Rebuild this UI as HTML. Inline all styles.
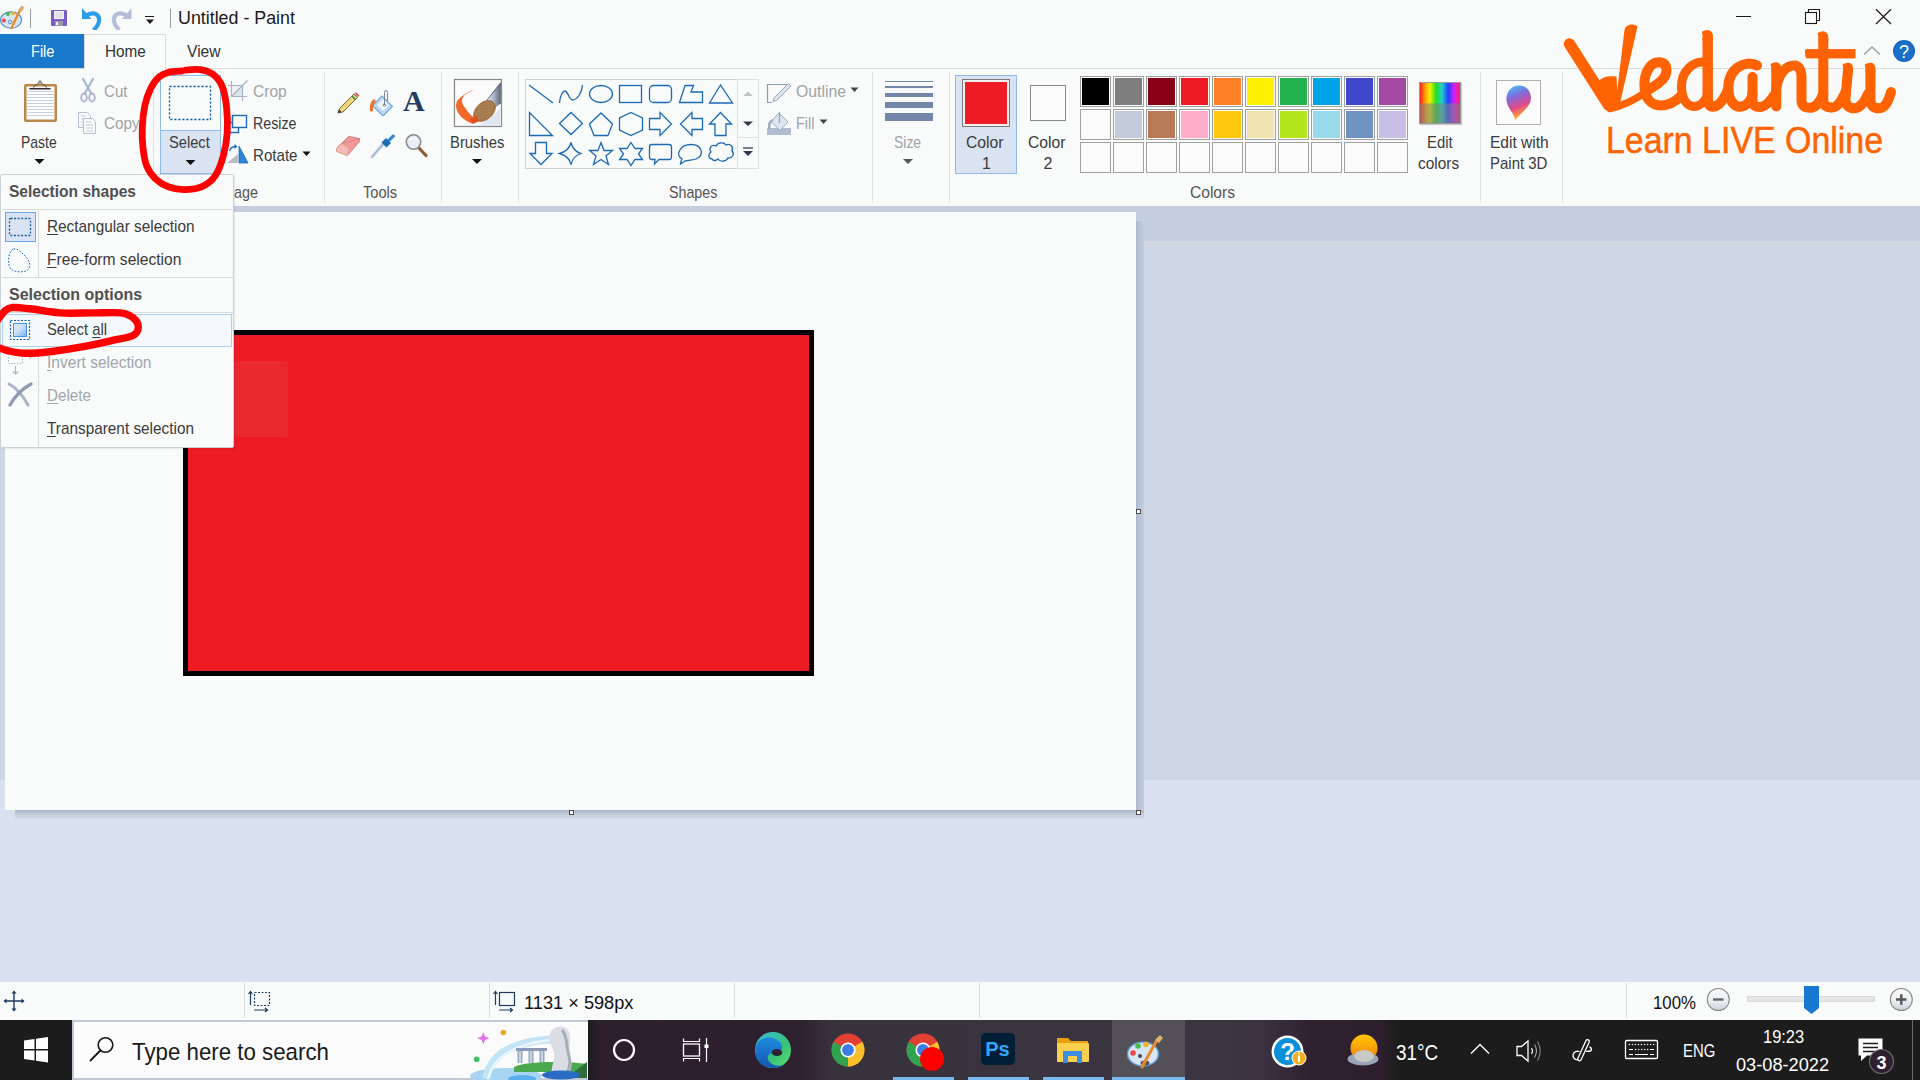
<!DOCTYPE html>
<html><head><meta charset="utf-8"><title>Untitled - Paint</title>
<style>
*{margin:0;padding:0;box-sizing:border-box}
html,body{width:1920px;height:1080px;overflow:hidden;background:#f9fafa;font-family:"Liberation Sans",sans-serif}
.a{position:absolute}
.t{position:absolute;white-space:nowrap}
u{text-decoration:underline;text-underline-offset:2px;text-decoration-thickness:1px}
</style></head><body>
<div class="a" style="left:0px;top:206px;width:1920px;height:776px;background:#cdd6e4;"></div><div class="a" style="left:0px;top:780px;width:1920px;height:202px;background:#d9e1f0;"></div><div class="a" style="left:0px;top:206px;width:1920px;height:35px;background:#c5cede;"></div><div class="a" style="left:1143px;top:241px;width:777px;height:4px;background:#d3d8e0;"></div><div class="a" style="left:1136px;top:221px;width:8px;height:597px;background:linear-gradient(90deg,#a9b5c9 0,#b8c3d4 30%,#bcc6d6 70%,#c8d0de 100%);"></div><div class="a" style="left:15px;top:810px;width:1129px;height:8px;background:linear-gradient(180deg,#a9b5c9 0,#b6c1d3 25%,#bcc6d6 50%,#c9d1e0 62%,#ccd4e2 100%);"></div><div class="a" style="left:5px;top:212px;width:1131px;height:598px;background:#f9fbfa;"></div><div class="a" style="left:183px;top:330px;width:631px;height:346px;background:#ed1c24;border:5px solid #000;"></div><div class="a" style="left:234px;top:361px;width:54px;height:76px;background:#e9282f;border-radius:3px;"></div><div class="a" style="left:1136px;top:509px;width:5px;height:5px;background:#fff;border:1px solid #4a4a4a;"></div><div class="a" style="left:569px;top:810px;width:5px;height:5px;background:#fff;border:1px solid #4a4a4a;"></div><div class="a" style="left:1136px;top:810px;width:5px;height:5px;background:#fff;border:1px solid #4a4a4a;"></div><div class="a" style="left:0px;top:0px;width:1920px;height:68px;background:#f9fafa;"></div><div class="t" style="left:178.00px;top:9.00px;font-size:18.90px;line-height:18.90px;color:#1a1a1a;transform:scaleX(0.9439);transform-origin:0.00px 0;">Untitled - Paint</div><div class="a" style="left:30px;top:9px;width:1px;height:19px;background:#9a9a9a;"></div><div class="a" style="left:170px;top:9px;width:1px;height:19px;background:#9a9a9a;"></div><div class="a" style="left:0px;top:34px;width:84px;height:34px;background:#1979ca;"></div><div class="a" style="left:84px;top:34px;width:82px;height:35px;background:#f9fafa;border:1px solid #dadbdc;border-bottom:none;"></div><div class="a" style="left:0px;top:68px;width:84px;height:1px;background:#dadbdc;"></div><div class="a" style="left:166px;top:68px;width:1754px;height:1px;background:#dadbdc;"></div><div class="t" style="left:30.60px;top:44.00px;font-size:15.99px;line-height:15.99px;color:#ffffff;transform:scaleX(0.9090);transform-origin:0.00px 0;">File</div><div class="t" style="left:104.90px;top:44.00px;font-size:15.99px;line-height:15.99px;color:#333333;transform:scaleX(0.9581);transform-origin:0.00px 0;">Home</div><div class="t" style="left:187.00px;top:44.00px;font-size:15.99px;line-height:15.99px;color:#333333;transform:scaleX(0.9775);transform-origin:0.00px 0;">View</div><div class="a" style="left:153px;top:72px;width:1px;height:131px;background:#e1e2e4;"></div><div class="a" style="left:324px;top:72px;width:1px;height:131px;background:#e1e2e4;"></div><div class="a" style="left:441px;top:72px;width:1px;height:131px;background:#e1e2e4;"></div><div class="a" style="left:518px;top:72px;width:1px;height:131px;background:#e1e2e4;"></div><div class="a" style="left:872px;top:72px;width:1px;height:131px;background:#e1e2e4;"></div><div class="a" style="left:949px;top:72px;width:1px;height:131px;background:#e1e2e4;"></div><div class="a" style="left:1480px;top:72px;width:1px;height:131px;background:#e1e2e4;"></div><div class="a" style="left:1562px;top:72px;width:1px;height:131px;background:#e1e2e4;"></div><div class="a" style="left:160px;top:75px;width:61px;height:99px;background:#f9fafa;border:1px solid #8cbbea;"></div><div class="a" style="left:160px;top:130px;width:61px;height:44px;background:#dae3f1;border:1px solid #8cbbea;"></div><div class="t" style="left:21.25px;top:135.00px;font-size:15.99px;line-height:15.99px;color:#3b3b3b;transform:scaleX(0.8739);transform-origin:0.00px 0;">Paste</div><div class="t" style="left:103.50px;top:84.00px;font-size:15.99px;line-height:15.99px;color:#a0a3a8;transform:scaleX(0.9452);transform-origin:0.00px 0;">Cut</div><div class="t" style="left:103.50px;top:116.00px;font-size:15.99px;line-height:15.99px;color:#a0a3a8;transform:scaleX(0.9509);transform-origin:0.00px 0;">Copy</div><div class="t" style="left:169.20px;top:135.00px;font-size:15.99px;line-height:15.99px;color:#3b3b3b;transform:scaleX(0.9179);transform-origin:0.00px 0;">Select</div><div class="t" style="left:253.00px;top:84.00px;font-size:15.99px;line-height:15.99px;color:#a0a3a8;transform:scaleX(0.9713);transform-origin:0.00px 0;">Crop</div><div class="t" style="left:253.00px;top:116.00px;font-size:15.99px;line-height:15.99px;color:#3b3b3b;transform:scaleX(0.8885);transform-origin:0.00px 0;">Resize</div><div class="t" style="left:253.00px;top:148.00px;font-size:15.99px;line-height:15.99px;color:#3b3b3b;transform:scaleX(0.9451);transform-origin:0.00px 0;">Rotate</div><div class="t" style="left:362.90px;top:185.00px;font-size:15.99px;line-height:15.99px;color:#555;transform:scaleX(0.9134);transform-origin:0.00px 0;">Tools</div><div class="t" style="left:450.00px;top:135.00px;font-size:15.99px;line-height:15.99px;color:#3b3b3b;transform:scaleX(0.9288);transform-origin:0.00px 0;">Brushes</div><div class="t" style="left:668.75px;top:185.00px;font-size:15.99px;line-height:15.99px;color:#555;transform:scaleX(0.8902);transform-origin:0.00px 0;">Shapes</div><div class="t" style="left:795.50px;top:84.00px;font-size:15.99px;line-height:15.99px;color:#a0a3a8;transform:scaleX(0.9865);transform-origin:0.00px 0;">Outline</div><div class="t" style="left:795.50px;top:116.00px;font-size:15.99px;line-height:15.99px;color:#a0a3a8;transform:scaleX(0.9075);transform-origin:0.00px 0;">Fill</div><div class="t" style="left:894.40px;top:135.00px;font-size:15.99px;line-height:15.99px;color:#a0a3a8;transform:scaleX(0.8715);transform-origin:0.00px 0;">Size</div><div class="t" style="left:1190.00px;top:185.00px;font-size:15.99px;line-height:15.99px;color:#555;transform:scaleX(0.9739);transform-origin:0.00px 0;">Colors</div><div class="t" style="left:1426.50px;top:135.00px;font-size:15.99px;line-height:15.99px;color:#3b3b3b;transform:scaleX(0.9318);transform-origin:0.00px 0;">Edit</div><div class="t" style="left:1418.20px;top:156.00px;font-size:15.99px;line-height:15.99px;color:#3b3b3b;transform:scaleX(0.9651);transform-origin:0.00px 0;">colors</div><div class="t" style="left:1489.70px;top:135.00px;font-size:15.99px;line-height:15.99px;color:#3b3b3b;transform:scaleX(0.9729);transform-origin:0.00px 0;">Edit with</div><div class="t" style="left:1490.40px;top:156.00px;font-size:15.99px;line-height:15.99px;color:#3b3b3b;transform:scaleX(0.9361);transform-origin:0.00px 0;">Paint 3D</div><div class="t" style="left:234.00px;top:185.00px;font-size:15.99px;line-height:15.99px;color:#555;transform:scaleX(0.8989);transform-origin:0.00px 0;">age</div><div class="a" style="left:955px;top:75px;width:62px;height:99px;background:#dae3f1;border:1px solid #8cbbea;"></div><div class="a" style="left:962px;top:79px;width:48px;height:48px;background:#ed1c24;border:1px solid #7a7a7a;box-shadow:inset 0 0 0 2px #f0f0f0;"></div><div class="a" style="left:1030px;top:85px;width:36px;height:36px;background:#fafbfa;border:1px solid #8a8a8a;"></div><div class="t" style="left:966.25px;top:135.00px;font-size:15.99px;line-height:15.99px;color:#3b3b3b;transform:scaleX(0.9814);transform-origin:0.00px 0;">Color</div><div class="t" style="left:982.00px;top:156.00px;font-size:15.99px;line-height:15.99px;color:#3b3b3b;">1</div><div class="t" style="left:1028.30px;top:135.00px;font-size:15.99px;line-height:15.99px;color:#3b3b3b;transform:scaleX(0.9814);transform-origin:0.00px 0;">Color</div><div class="t" style="left:1043.60px;top:156.00px;font-size:15.99px;line-height:15.99px;color:#3b3b3b;">2</div><div class="a" style="left:1080px;top:76px;width:31px;height:31px;background:#000000;border:1px solid #a0a0a0;box-shadow:inset 0 0 0 1px #fafbfa;"></div><div class="a" style="left:1080px;top:109px;width:31px;height:31px;background:#fafbfa;border:1px solid #a0a0a0;box-shadow:inset 0 0 0 1px #fafbfa;"></div><div class="a" style="left:1080px;top:142px;width:31px;height:31px;background:#fafbfa;border:1px solid #a0a0a0;"></div><div class="a" style="left:1113px;top:76px;width:31px;height:31px;background:#7f7f7f;border:1px solid #a0a0a0;box-shadow:inset 0 0 0 1px #fafbfa;"></div><div class="a" style="left:1113px;top:109px;width:31px;height:31px;background:#c3cad9;border:1px solid #a0a0a0;box-shadow:inset 0 0 0 1px #fafbfa;"></div><div class="a" style="left:1113px;top:142px;width:31px;height:31px;background:#fafbfa;border:1px solid #a0a0a0;"></div><div class="a" style="left:1146px;top:76px;width:31px;height:31px;background:#880015;border:1px solid #a0a0a0;box-shadow:inset 0 0 0 1px #fafbfa;"></div><div class="a" style="left:1146px;top:109px;width:31px;height:31px;background:#b97a57;border:1px solid #a0a0a0;box-shadow:inset 0 0 0 1px #fafbfa;"></div><div class="a" style="left:1146px;top:142px;width:31px;height:31px;background:#fafbfa;border:1px solid #a0a0a0;"></div><div class="a" style="left:1179px;top:76px;width:31px;height:31px;background:#ed1c24;border:1px solid #a0a0a0;box-shadow:inset 0 0 0 1px #fafbfa;"></div><div class="a" style="left:1179px;top:109px;width:31px;height:31px;background:#ffaec9;border:1px solid #a0a0a0;box-shadow:inset 0 0 0 1px #fafbfa;"></div><div class="a" style="left:1179px;top:142px;width:31px;height:31px;background:#fafbfa;border:1px solid #a0a0a0;"></div><div class="a" style="left:1212px;top:76px;width:31px;height:31px;background:#ff7f27;border:1px solid #a0a0a0;box-shadow:inset 0 0 0 1px #fafbfa;"></div><div class="a" style="left:1212px;top:109px;width:31px;height:31px;background:#ffc90e;border:1px solid #a0a0a0;box-shadow:inset 0 0 0 1px #fafbfa;"></div><div class="a" style="left:1212px;top:142px;width:31px;height:31px;background:#fafbfa;border:1px solid #a0a0a0;"></div><div class="a" style="left:1245px;top:76px;width:31px;height:31px;background:#fff200;border:1px solid #a0a0a0;box-shadow:inset 0 0 0 1px #fafbfa;"></div><div class="a" style="left:1245px;top:109px;width:31px;height:31px;background:#efe4b0;border:1px solid #a0a0a0;box-shadow:inset 0 0 0 1px #fafbfa;"></div><div class="a" style="left:1245px;top:142px;width:31px;height:31px;background:#fafbfa;border:1px solid #a0a0a0;"></div><div class="a" style="left:1278px;top:76px;width:31px;height:31px;background:#22b14c;border:1px solid #a0a0a0;box-shadow:inset 0 0 0 1px #fafbfa;"></div><div class="a" style="left:1278px;top:109px;width:31px;height:31px;background:#b5e61d;border:1px solid #a0a0a0;box-shadow:inset 0 0 0 1px #fafbfa;"></div><div class="a" style="left:1278px;top:142px;width:31px;height:31px;background:#fafbfa;border:1px solid #a0a0a0;"></div><div class="a" style="left:1311px;top:76px;width:31px;height:31px;background:#00a2e8;border:1px solid #a0a0a0;box-shadow:inset 0 0 0 1px #fafbfa;"></div><div class="a" style="left:1311px;top:109px;width:31px;height:31px;background:#99d9ea;border:1px solid #a0a0a0;box-shadow:inset 0 0 0 1px #fafbfa;"></div><div class="a" style="left:1311px;top:142px;width:31px;height:31px;background:#fafbfa;border:1px solid #a0a0a0;"></div><div class="a" style="left:1344px;top:76px;width:31px;height:31px;background:#3f48cc;border:1px solid #a0a0a0;box-shadow:inset 0 0 0 1px #fafbfa;"></div><div class="a" style="left:1344px;top:109px;width:31px;height:31px;background:#7092be;border:1px solid #a0a0a0;box-shadow:inset 0 0 0 1px #fafbfa;"></div><div class="a" style="left:1344px;top:142px;width:31px;height:31px;background:#fafbfa;border:1px solid #a0a0a0;"></div><div class="a" style="left:1377px;top:76px;width:31px;height:31px;background:#a349a4;border:1px solid #a0a0a0;box-shadow:inset 0 0 0 1px #fafbfa;"></div><div class="a" style="left:1377px;top:109px;width:31px;height:31px;background:#c8bfe7;border:1px solid #a0a0a0;box-shadow:inset 0 0 0 1px #fafbfa;"></div><div class="a" style="left:1377px;top:142px;width:31px;height:31px;background:#fafbfa;border:1px solid #a0a0a0;"></div><div class="a" style="left:885px;top:81px;width:48px;height:1px;background:#7587a8;"></div><div class="a" style="left:885px;top:86px;width:48px;height:2px;background:#7587a8;"></div><div class="a" style="left:885px;top:93px;width:48px;height:4px;background:#7587a8;"></div><div class="a" style="left:885px;top:102px;width:48px;height:6px;background:#7587a8;"></div><div class="a" style="left:885px;top:113px;width:48px;height:8px;background:#7587a8;"></div><div class="a" style="left:233px;top:176px;width:3px;height:273px;background:linear-gradient(90deg,rgba(0,0,0,.12),rgba(0,0,0,0));"></div><div class="a" style="left:3px;top:447px;width:232px;height:3px;background:linear-gradient(180deg,rgba(0,0,0,.12),rgba(0,0,0,0));"></div><div class="a" style="left:0px;top:174px;width:234px;height:274px;background:#f9fafa;border:1px solid #cdd0d6;border-radius:2px;"></div><div class="a" style="left:2px;top:209px;width:231px;height:1px;background:#d9dbde;"></div><div class="a" style="left:2px;top:277px;width:231px;height:1px;background:#d9dbde;"></div><div class="a" style="left:2px;top:312px;width:231px;height:1px;background:#d9dbde;"></div><div class="a" style="left:38px;top:211px;width:1px;height:66px;background:#d9dbde;"></div><div class="a" style="left:38px;top:347px;width:1px;height:100px;background:#d9dbde;"></div><div class="t" style="left:9.00px;top:184.00px;font-size:15.99px;line-height:15.99px;color:#505050;transform:scaleX(0.9722);transform-origin:0.00px 0;font-weight:bold;">Selection shapes</div><div class="t" style="left:9.00px;top:287.00px;font-size:15.99px;line-height:15.99px;color:#505050;font-weight:bold;">Selection options</div><div class="t" style="left:47.00px;top:219.00px;font-size:15.99px;line-height:15.99px;color:#3b3b3b;transform:scaleX(0.9601);transform-origin:0.00px 0;"><u>R</u>ectangular selection</div><div class="t" style="left:47.00px;top:252.00px;font-size:15.99px;line-height:15.99px;color:#3b3b3b;transform:scaleX(0.9765);transform-origin:0.00px 0;"><u>F</u>ree-form selection</div><div class="a" style="left:2px;top:314px;width:230px;height:33px;background:#f5f9fc;border:1px solid #a9d1f5;"></div><div class="t" style="left:47.00px;top:322.00px;font-size:15.99px;line-height:15.99px;color:#3b3b3b;transform:scaleX(0.9243);transform-origin:0.00px 0;">Select <u>a</u>ll</div><div class="t" style="left:47.00px;top:355.00px;font-size:15.99px;line-height:15.99px;color:#a3a6ab;transform:scaleX(0.9719);transform-origin:0.00px 0;"><u>I</u>nvert selection</div><div class="t" style="left:47.00px;top:388.00px;font-size:15.99px;line-height:15.99px;color:#a3a6ab;transform:scaleX(0.9522);transform-origin:0.00px 0;"><u>D</u>elete</div><div class="t" style="left:47.00px;top:421.00px;font-size:15.99px;line-height:15.99px;color:#3b3b3b;transform:scaleX(0.9597);transform-origin:0.00px 0;"><u>T</u>ransparent selection</div><div class="a" style="left:5px;top:212px;width:31px;height:30px;background:#dae3f1;border:1px solid #6aa6e8;"></div><div class="a" style="left:0px;top:981px;width:1920px;height:39px;background:#f9fafa;border-top:1px solid #dfe3ea;"></div><div class="a" style="left:244px;top:983px;width:1px;height:35px;background:#dcdcdc;"></div><div class="a" style="left:489px;top:983px;width:1px;height:35px;background:#dcdcdc;"></div><div class="a" style="left:734px;top:983px;width:1px;height:35px;background:#dcdcdc;"></div><div class="a" style="left:979px;top:983px;width:1px;height:35px;background:#dcdcdc;"></div><div class="a" style="left:1626px;top:983px;width:1px;height:35px;background:#dcdcdc;"></div><div class="t" style="left:523.80px;top:994.00px;font-size:18.90px;line-height:18.90px;color:#111111;transform:scaleX(0.9634);transform-origin:0.00px 0;">1131 &times; 598px</div><div class="t" style="left:1653.00px;top:994.00px;font-size:18.90px;line-height:18.90px;color:#111111;transform:scaleX(0.8889);transform-origin:0.00px 0;">100%</div><div class="a" style="left:1747px;top:996px;width:128px;height:6px;background:#e6e6e6;border:1px solid #dadada;"></div><div class="a" style="left:0px;top:1020px;width:1920px;height:60px;background:linear-gradient(90deg,#1c1c1c 0,#1c1c1c 587px,#2d1f2e 600px,#2e202f 800px,#38323d 830px,#3a3540 1230px,#3c3241 1260px,#302131 1310px,#2e1f2e 1380px,#1c1c1c 1400px,#1c1c1c 1920px);"></div><div class="a" style="left:72px;top:1020px;width:516px;height:60px;background:#fafbfa;border:2px solid #c2c9d6;border-right:none;"></div><div class="t" style="left:132.00px;top:1041.00px;font-size:23.26px;line-height:23.26px;color:#1a1a1a;transform:scaleX(0.9583);transform-origin:0.00px 0;">Type here to search</div><div class="t" style="left:1395.80px;top:1042.00px;font-size:21.80px;line-height:21.80px;color:#ffffff;transform:scaleX(0.8660);transform-origin:0.00px 0;">31°C</div><div class="t" style="left:1683.00px;top:1042.00px;font-size:18.90px;line-height:18.90px;color:#ffffff;transform:scaleX(0.7871);transform-origin:0.00px 0;">ENG</div><div class="t" style="left:1762.70px;top:1028.00px;font-size:18.75px;line-height:18.75px;color:#ffffff;transform:scaleX(0.8772);transform-origin:0.00px 0;">19:23</div><div class="t" style="left:1736.30px;top:1055.00px;font-size:19.19px;line-height:19.19px;color:#ffffff;transform:scaleX(0.9487);transform-origin:0.00px 0;">03-08-2022</div><div class="a" style="left:1112px;top:1020px;width:73px;height:60px;background:#545058;"></div><div class="a" style="left:893px;top:1077px;width:61px;height:3px;background:#76b9ed;"></div><div class="a" style="left:968px;top:1077px;width:61px;height:3px;background:#76b9ed;"></div><div class="a" style="left:1043px;top:1077px;width:61px;height:3px;background:#76b9ed;"></div><div class="a" style="left:1112px;top:1077px;width:73px;height:3px;background:#76b9ed;"></div><div class="a" style="left:1912px;top:1020px;width:1px;height:60px;background:#6a6a6a;"></div><div class="t" style="left:1605.50px;top:122.00px;font-size:37.21px;line-height:37.21px;color:#ff6400;transform:scaleX(0.9112);transform-origin:0.00px 0;-webkit-text-stroke:0.5px #ff6400;">Learn LIVE Online</div><svg class="a" style="left:0;top:0" width="1920" height="130" viewBox="0 0 1920 130"><g fill="none" stroke="#ff6200" stroke-linecap="round" stroke-linejoin="round">
<path stroke-width="11.5" d="M1569.5,44 L1608.5,105"/>
<path stroke-width="7.5" d="M1610,108.5 C1622,106 1636,99 1646,92"/>
<path stroke-width="10" d="M1645,92 C1651,88 1657,85 1661,81 C1668,75 1669,63 1660,62.3 C1650,61.5 1644.4,73 1644.4,85 C1644.4,98 1651,105.4 1661,105.4 C1670,105.4 1676,101 1681,96"/>
<path stroke-width="9" d="M1707,62.5 C1692,59.5 1681.5,73 1681.5,86 C1681.5,99 1687,106.5 1694,106.5 C1700,106.5 1705,101 1707.7,95"/>
<path stroke-width="10.4" stroke-linecap="butt" d="M1707.7,38 L1707.7,99 C1707.7,106.5 1712,107.5 1716,106"/>
<path stroke-width="10" d="M1716,106 C1721,104 1725,97 1728.3,89"/>
<path stroke-width="10" d="M1757,65.5 C1745,59 1728.3,69 1728.3,88 C1728.3,100 1734,106.8 1740,106.8 C1747,106.8 1752.5,99 1752.5,93"/>
<path stroke-width="10" d="M1752.5,77 L1752.5,99 C1752.5,106 1756,107.5 1761,107 C1767,106 1772,99 1776.25,92"/>
<path stroke-width="10" stroke-linecap="butt" d="M1776.25,70 L1776.25,104"/>
<path stroke-width="10" d="M1776.25,104 L1776.25,106.5"/>
<path stroke-width="10" d="M1776.25,88 C1779,72 1787,65.5 1794,65.5 C1799,65.5 1801.5,70 1801.5,78 L1801.5,100 C1801.5,106 1805,107.8 1810,107.8 C1816,107.8 1820,102 1823.3,94"/>
<path stroke-width="10" stroke-linecap="butt" d="M1823.3,39 L1823.3,99 C1823.3,106 1827,107.5 1832,107.5"/>
<path stroke-width="10" d="M1832,107.5 C1838,107.5 1842,100 1845.5,92"/>
<path stroke-width="9" stroke-linecap="butt" d="M1806,53.8 L1855,53.8"/>
<path stroke-width="10" stroke-linecap="butt" d="M1848,70 L1845.5,98 C1845,105 1849,108.3 1854,108.3"/>
<path stroke-width="10" d="M1854,108.3 C1860,108.3 1865,101 1868,94"/>
<path stroke-width="10" stroke-linecap="butt" d="M1870.4,70 L1870.4,99 C1870.4,106 1874,108.3 1879,108.3"/>
<path stroke-width="10" d="M1879,108.3 C1886,108.3 1889,99 1891,92"/>
</g>
<path fill="#ff6200" d="M1805,50.5 Q1805,49.3 1807,49.3 L1855.5,49.3 L1855.5,58.3 L1809,58.3 Q1805,58.3 1805,54 Z"/>
<path fill="#ff6200" d="M1624.5,30 C1625.5,25 1632,22.5 1637.5,26.5 L1619.5,105.5 L1615.5,104.5 Z"/>
<path fill="#ff6200" d="M1599,80.5 C1603,76.5 1609,75.5 1616.5,76.5 L1618,105 L1609,109 Z"/>
<path fill="#ff6200" d="M1702.5,40.2 L1702.5,35.2 L1701.8,31.8 Q1705.5,29.599999999999998 1708.5,30.2 Q1713.2,31.2 1712.9,37.2 L1712.9,40.2 Z"/><path fill="#ff6200" d="M1771.25,72.5 L1771.25,67.5 L1770.55,64.1 Q1774.25,61.9 1777.25,62.5 Q1781.55,63.5 1781.25,69.5 L1781.25,72.5 Z"/><path fill="#ff6200" d="M1818.3,41.5 L1818.3,36.5 L1817.6,33.1 Q1821.3,30.9 1824.3,31.5 Q1828.6,32.5 1828.3,38.5 L1828.3,41.5 Z"/><path fill="#ff6200" d="M1843.2,72.8 L1843.2,67.8 L1842.5,64.39999999999999 Q1846.2,62.199999999999996 1849.2,62.8 Q1853.3,63.8 1853,69.8 L1853,72.8 Z"/><path fill="#ff6200" d="M1865.4,72.8 L1865.4,67.8 L1864.7,64.39999999999999 Q1868.4,62.199999999999996 1871.4,62.8 Q1875.7,63.8 1875.4,69.8 L1875.4,72.8 Z"/></svg><svg class="a" style="left:0px;top:3px" width="26" height="27" viewBox="0 0 26 27"><ellipse cx="11" cy="17" rx="10.5" ry="8" fill="#d6e6f5" stroke="#5b97cf" stroke-width="1.3"/>
<circle cx="4" cy="17.5" r="2" fill="#e84a4a"/><circle cx="8" cy="11" r="2" fill="#4fb84f"/><circle cx="13" cy="10.5" r="2" fill="#f0b428"/>
<circle cx="10" cy="19" r="1.8" fill="none" stroke="#5b97cf" stroke-width="1"/><ellipse cx="12" cy="23" rx="3" ry="1.6" fill="#f9fafa"/>
<path d="M11.5,25 L20,7" stroke="#e8892a" stroke-width="2.4" stroke-linecap="round"/><path d="M18.5,6 L22,2.5 L24.5,4.5 L21.5,9 Z" fill="#e0b070"/></svg><svg class="a" style="left:50px;top:9px" width="19" height="18" viewBox="0 0 19 18"><rect x="1" y="1" width="16" height="16" rx="1" fill="#7a5cc8"/><rect x="4" y="2" width="10" height="8" fill="#f4f4f8"/>
<path d="M5,4 H13 M5,6 H13 M5,8 H13" stroke="#c8c8d8" stroke-width=".8"/><rect x="5" y="12" width="8" height="5" fill="#9a9aa8"/><rect x="6" y="13" width="2" height="3" fill="#f4f4f8"/></svg><svg class="a" style="left:80px;top:6px" width="22" height="24" viewBox="0 0 22 24"><path d="M6,9.5 C13,5 20,8 19,15 C18.5,19 16,22 13.5,24" fill="none" stroke="#2b9de9" stroke-width="4.2" stroke-linecap="butt"/>
<path d="M2,2 L2,13 L11.5,13 Z" fill="#2b9de9"/></svg><svg class="a" style="left:111px;top:6px" width="22" height="24" viewBox="0 0 22 24"><path d="M16,9.5 C9,5 2,8 3,15 C3.5,19 6,22 8.5,24" fill="none" stroke="#b3c0d8" stroke-width="4.2"/>
<path d="M20.5,2 L20.5,13 L11,13 Z" fill="#b3c0d8"/></svg><div class="a" style="left:145px;top:16px;width:9px;height:1px;background:#1a1a1a;"></div><svg class="a" style="left:145px;top:19px" width="10" height="6" viewBox="0 0 10 6"><path d="M1,0.5 L9,0.5 L5,5 Z" fill="#1a1a1a"/></svg><div class="a" style="left:1736px;top:16px;width:15px;height:1px;background:#1a1a1a;"></div><svg class="a" style="left:1800px;top:5px" width="26" height="24" viewBox="0 0 26 24"><rect x="5.5" y="7.5" width="11" height="11" fill="none" stroke="#1a1a1a" stroke-width="1.1"/><path d="M8.5,7.5 V4.5 H19.5 V15.5 H16.5" fill="none" stroke="#1a1a1a" stroke-width="1.1"/></svg><svg class="a" style="left:1870px;top:4px" width="28" height="24" viewBox="0 0 28 24"><path d="M6,5.2 L21,20 M21,5.2 L6,20" stroke="#1a1a1a" stroke-width="1.2"/></svg><svg class="a" style="left:1860px;top:42px" width="24" height="16" viewBox="0 0 24 16"><path d="M4,12.5 L12,5 L20,12.5" fill="none" stroke="#9aa2ae" stroke-width="1.4"/></svg><svg class="a" style="left:1890px;top:37px" width="28" height="28" viewBox="0 0 28 28"><circle cx="14" cy="14" r="11" fill="#1565c0"/><circle cx="14" cy="14" r="10" fill="#1b6fc9"/>
<text x="14" y="20.5" text-anchor="middle" font-family="Liberation Sans" font-size="18" fill="#fff">?</text></svg><svg class="a" style="left:20px;top:78px" width="40" height="48" viewBox="0 0 40 48"><rect x="4" y="6" width="33" height="38" rx="2" fill="#b8874a"/><rect x="6.5" y="8.5" width="28" height="33" fill="#fdfdfd"/>
<path d="M7,13.5 H34 M7,16.5 H34 M7,19.5 H34 M7,22.5 H34 M7,25.5 H34 M7,28.5 H34 M7,31.5 H34 M7,34.5 H34 M7,37.5 H34" stroke="#c6d1e1" stroke-width="1"/>
<path d="M10,10.8 H30" stroke="#3a2a3a" stroke-width="1.6" stroke-linecap="round"/><path d="M13,9.5 L20,4 L27,9.5" fill="none" stroke="#555" stroke-width="1"/><rect x="18.5" y="2.5" width="3" height="3" fill="#888"/></svg><svg class="a" style="left:78px;top:77px" width="20" height="27" viewBox="0 0 20 27"><path d="M5,2 L13.5,17 M15,2 L6.5,17" stroke="#a9b6cb" stroke-width="2.2" stroke-linecap="round"/>
<ellipse cx="6" cy="20.5" rx="2.8" ry="4" fill="none" stroke="#a9b6cb" stroke-width="1.8"/><ellipse cx="14" cy="20.5" rx="2.8" ry="4" fill="none" stroke="#a9b6cb" stroke-width="1.8"/></svg><svg class="a" style="left:76px;top:110px" width="22" height="26" viewBox="0 0 22 26"><path d="M2.5,2.5 H11.5 L14.5,5.5 V17.5 H2.5 Z" fill="#f9fafa" stroke="#b4c0d4" stroke-width="1"/>
<path d="M7.5,8.5 H16.5 L19.5,11.5 V23.5 H7.5 Z" fill="#f9fafa" stroke="#b4c0d4" stroke-width="1"/>
<path d="M10,12 H15 M10,15 H17 M10,18 H17 M10,21 H17 M5,6 H10 M5,9 H7 M5,12 H7 M5,15 H7" stroke="#c4cede" stroke-width="1"/></svg><svg class="a" style="left:160px;top:75px" width="61" height="99" viewBox="0 0 61 99"><rect x="9.5" y="11.5" width="41" height="33" fill="none" stroke="#1c5fa8" stroke-width="1.3" stroke-dasharray="2.2,1.8"/>
<path d="M25.5,85 L35.5,85 L30.5,90 Z" fill="#111"/></svg><svg class="a" style="left:33px;top:158px" width="14" height="8" viewBox="0 0 14 8"><path d="M1.5,1 L11.5,1 L6.5,6 Z" fill="#111"/></svg><svg class="a" style="left:226px;top:78px" width="24" height="26" viewBox="0 0 24 26"><path d="M17,18 L6.5,18 L6.5,7.5 L17,7.5 Z" fill="#eef0f3"/><path d="M6.5,18 L17,7.5 L17,18 Z" fill="#dfe3ea"/>
<path d="M5.5,3 V18.5 H21 M2,7.5 H16.5 V23" fill="none" stroke="#a6b2c6" stroke-width="1.2"/><path d="M6,18 L21.5,2.5" stroke="#a6b2c6" stroke-width="1.2"/></svg><svg class="a" style="left:226px;top:112px" width="24" height="24" viewBox="0 0 24 24"><rect x="2.5" y="10.5" width="10" height="10" fill="none" stroke="#1a6cb6" stroke-width="1.4"/>
<rect x="6.5" y="3.5" width="14" height="12" fill="#f9fafa" stroke="#1a6cb6" stroke-width="1.4"/></svg><svg class="a" style="left:226px;top:143px" width="26" height="22" viewBox="0 0 26 22"><path d="M1,20 L12,11 L12,20 Z" fill="#b9bdc4"/><path d="M13,3 L22,20 L13,20 Z" fill="#2f86d6" stroke="#1a6cb6" stroke-width="0.8"/>
<path d="M3.5,8 Q5,3.5 9.5,3.5" fill="none" stroke="#1a6cb6" stroke-width="1.3"/><path d="M8.5,1 L11.5,3.5 L8.5,6 Z" fill="#1a6cb6"/></svg><svg class="a" style="left:302px;top:151px" width="10" height="6" viewBox="0 0 10 6"><path d="M0.5,0.5 L8.5,0.5 L4.5,5 Z" fill="#111"/></svg><svg class="a" style="left:335px;top:90px" width="26" height="26" viewBox="0 0 26 26"><path d="M3,23 L4.5,18.5 L19,4 L22.5,7.5 L8,22 Z" fill="#f1d57a" stroke="#6b5a3a" stroke-width="0.9"/>
<path d="M17,6 L20.5,9.5" stroke="#2a8a3a" stroke-width="1.5"/><path d="M19.5,3.5 L21,2 L24.5,5.5 L23,7 Z" fill="#e06070"/><path d="M3,23 L4,19.5 L6.5,22 Z" fill="#333"/></svg><svg class="a" style="left:368px;top:88px" width="28" height="28" viewBox="0 0 28 28"><path d="M14,8 L24.5,18.5 L15,28 L4.5,17.5 Z" fill="#bcd8f2" stroke="#6fa7de" stroke-width="1.1"/><path d="M9,17 L15,11 L21,17 L15,23 Z" fill="#eef4fb"/>
<path d="M6,13 Q3,16 3.5,22" fill="none" stroke="#f07030" stroke-width="3.2" stroke-linecap="round"/>
<path d="M16.5,17 V4.5 Q16.5,2.5 18,2.5 Q19.5,2.5 19.5,4.5 V13" fill="none" stroke="#7a8494" stroke-width="1"/><circle cx="16.5" cy="17" r="1.3" fill="none" stroke="#7a8494" stroke-width=".9"/></svg><div class="t" style="left:403px;top:86px;font-family:'Liberation Serif',serif;font-weight:bold;font-size:30px;line-height:30px;color:#243a66">A</div><svg class="a" style="left:334px;top:133px" width="30" height="26" viewBox="0 0 30 26"><path d="M14.9,3.3 L25.9,5.6 L25.1,9.2 L13.3,22.5 L2.3,18.2 L3.1,14.7 Z" fill="#f29a9a" stroke="#c87878" stroke-width="0.8"/>
<path d="M3.1,14.7 L14.9,3.3 M8,10.5 L25.6,6" stroke="#c87878" stroke-width="0.6" fill="none"/>
<path d="M3.1,14.7 L8,10.5 L15,16 L13.3,22.5 L2.3,18.2 Z" fill="#f7baba" stroke="#c8a060" stroke-width="0.7" stroke-dasharray="1,0.8"/></svg><svg class="a" style="left:369px;top:132px" width="28" height="28" viewBox="0 0 28 28"><path d="M3,25 L15,11" stroke="#c4d2e6" stroke-width="3.2" stroke-linecap="round"/><path d="M3,25 L15,11" stroke="#8a98b0" stroke-width="0.8"/>
<path d="M12.5,10.5 L17,6 L22,11 L17.5,15.5 Z" fill="#1d6ab5"/><path d="M18,8 L23.5,2.5 Q26,2 26,4.5 L20.5,10 Z" fill="#2f86d6"/></svg><svg class="a" style="left:403px;top:132px" width="26" height="28" viewBox="0 0 26 28"><path d="M15,15 L23,23.5" stroke="#8a5a34" stroke-width="3.2" stroke-linecap="round"/>
<circle cx="10.5" cy="10" r="7.2" fill="#e6eef8" stroke="#8c8c8c" stroke-width="1.6"/><path d="M6,8 Q10,5 14,8" stroke="#fff" stroke-width="1.5" fill="none"/></svg><svg class="a" style="left:453px;top:78px" width="50" height="50" viewBox="0 0 50 50"><defs><linearGradient id="bh" x1="0" y1="0" x2="1" y2="0"><stop offset="0" stop-color="#e8ecf2"/><stop offset=".5" stop-color="#aab4c6"/><stop offset="1" stop-color="#5a6478"/></linearGradient>
<pattern id="hatch" width="2" height="2" patternUnits="userSpaceOnUse"><rect width="2" height="2" fill="#b08458"/><rect width="1" height="1" fill="#8a6438"/></pattern></defs>
<rect x="1.5" y="1.5" width="47" height="47" fill="#fbfbfb" stroke="#888" stroke-width="1.2"/>
<path d="M47,30 L47,48 L24,48 Q38,42 47,30 Z" fill="#dfe6f0"/>
<path d="M33.7,22 L47.9,4.1 L47.9,25.5 L41.3,30.1 Z" fill="url(#bh)"/><path d="M34,22 L47.5,5" stroke="#4a5468" stroke-width=".8"/>
<path d="M20.9,11.8 C17,13 8,18 4.6,22.5 C2,26 2.5,32 7.2,37.8 C10,41 15,44.5 19.9,45.4 L22,40 C18,38 14,33 12.3,30.1 C9,26 8,22 10.2,18.9 C12,16 17,14 20.9,11.8 Z" fill="#f0682a"/>
<ellipse cx="31.5" cy="33" rx="12.5" ry="8.5" transform="rotate(-42 31.5 33)" fill="url(#hatch)" stroke="#8a6030" stroke-width=".7"/>
<path d="M17,42 L23,37 L26,43 L20,46 Z" fill="#e05020"/></svg><svg class="a" style="left:471px;top:158px" width="12" height="8" viewBox="0 0 12 8"><path d="M1,1 L11,1 L6,6 Z" fill="#111"/></svg><div class="a" style="left:525px;top:79px;width:213px;height:90px;background:#f9fafa;border:1px solid #cdd1d8;"></div><div class="a" style="left:737px;top:79px;width:22px;height:90px;background:#f9fafa;border:1px solid #dde0e5;"></div><div class="a" style="left:737px;top:137px;width:22px;height:1px;background:#dde0e5;"></div><svg class="a" style="left:737px;top:79px" width="22" height="90" viewBox="0 0 22 90"><path d="M6,17 L11,12.5 L16,17 Z" fill="#c0c4cc"/><path d="M6,42.5 L16,42.5 L11,47 Z" fill="#333a48"/>
<path d="M6,69 H16" stroke="#333a48" stroke-width="1.3"/><path d="M6,72 L16,72 L11,77 Z" fill="#333a48"/></svg><svg class="a" style="left:0;top:0" width="760" height="170" viewBox="0 0 760 170"><g fill="none" stroke="#1c6ab5" stroke-width="1.3" stroke-linejoin="miter">
<path d="M529,85 L553,103"/>
<path d="M559.5,103 C560,95 563,91 565,91 C568,91 569,100 572.5,100 C577,100 582,93 582.5,85"/>
<ellipse cx="601" cy="94" rx="11.5" ry="8.5"/>
<rect x="619.5" y="85.5" width="22" height="17"/>
<rect x="649.5" y="85.5" width="22" height="17" rx="4"/>
<path d="M679.5,102.5 L685,85.5 L693.5,85.5 L691,92 L702.5,92 L702.5,102.5 Z"/>
<path d="M720.5,85 L709.5,103 L732.5,103 Z"/>
<path d="M529.5,112.5 L529.5,135.5 L552.5,135.5 Z"/>
<path d="M571,112.5 L582.5,123.5 L571,134.5 L559.5,123.5 Z"/>
<path d="M601,113 L612.5,124 L608,135.5 L594,135.5 L589.5,124 Z"/>
<path d="M631,112.5 L642.5,118 L642.5,130 L631,135.5 L619.5,130 L619.5,118 Z"/>
<path d="M649.5,118.5 L660,118.5 L660,112.5 L671.5,124 L660,135.5 L660,129.5 L649.5,129.5 Z"/>
<path d="M702.5,118.5 L692,118.5 L692,112.5 L680.5,124 L692,135.5 L692,129.5 L702.5,129.5 Z"/>
<path d="M715,135.5 L715,124 L709.5,124 L720.5,112.5 L731.5,124 L726,124 L726,135.5 Z"/>
<path d="M535.5,142.5 L546.5,142.5 L546.5,153.5 L552,153.5 L541,164.5 L530,153.5 L535.5,153.5 Z"/>
<path d="M571,142.5 Q573,151 581,153.5 Q573,156 571,164.5 Q569,156 559.5,153.5 Q569,151 571,142.5 Z"/>
<path d="M601,142.5 L604,150.5 L612.5,150.5 L606,156 L608.5,164.5 L601,159.5 L593.5,164.5 L596,156 L589.5,150.5 L598,150.5 Z"/>
<path d="M631,142.5 L635,148.5 L642.5,148.5 L638.5,154 L642.5,159.5 L635,159.5 L631,165.5 L627,159.5 L619.5,159.5 L623.5,154 L619.5,148.5 L627,148.5 Z"/>
<path d="M652,144.5 H669 Q671.5,144.5 671.5,147 V157 Q671.5,159.5 669,159.5 H659 L654.5,164 L655,159.5 H652 Q649.5,159.5 649.5,157 V147 Q649.5,144.5 652,144.5 Z"/>
<path d="M685,161 Q680.5,164 680.5,164 Q681,160 682,159 C675,155 680,144.5 691,144.5 C702,144.5 705,155 696,159 C693,160 689,160 685,161 Z"/>
<path d="M712,159 C707,158 709,153 711,152 C708,148 712,144 716,146 C718,142 724,142 726,145 C730,143 734,147 732,151 C735,154 732,159 728,158 C726,162 720,162 718,159 C716,161 713,161 712,159 Z"/>
</g></svg><svg class="a" style="left:764px;top:82px" width="30" height="24" viewBox="0 0 30 24"><path d="M23,2.5 H3.5 V20.5 H8" fill="none" stroke="#8d9cb8" stroke-width="1.2"/>
<path d="M9,19.5 L10,16 L24.5,1.5 L27,4 L12.5,18.5 Z" fill="#dde4ee" stroke="#9aa8c0" stroke-width="1"/></svg><svg class="a" style="left:850px;top:87px" width="10" height="6" viewBox="0 0 10 6"><path d="M0.5,0.5 L8.5,0.5 L4.5,5 Z" fill="#444"/></svg><svg class="a" style="left:764px;top:109px" width="30" height="28" viewBox="0 0 30 28"><rect x="3" y="19" width="24" height="7" fill="#b1bdd0"/>
<path d="M15,4 L24,13 L16,21.5 L7,12.5 Z" fill="#e0e6ef" stroke="#9aa8c0" stroke-width="1"/><path d="M5.5,20 Q4,13 9,11" fill="none" stroke="#9aa8c0" stroke-width="2.4"/>
<path d="M15.5,14 V3" stroke="#9aa8c0" stroke-width="1.4"/></svg><svg class="a" style="left:819px;top:119px" width="10" height="6" viewBox="0 0 10 6"><path d="M0.5,0.5 L8.5,0.5 L4.5,5 Z" fill="#444"/></svg><svg class="a" style="left:902px;top:158px" width="12" height="8" viewBox="0 0 12 8"><path d="M1,1 L11,1 L6,6 Z" fill="#555"/></svg><div class="a" style="left:1419px;top:82px;width:42px;height:42px;border:1px solid #9a9a9a;box-shadow:1px 1px 1px rgba(0,0,0,.2);background:linear-gradient(180deg,rgba(0,0,0,0) 0,rgba(0,0,0,0) 50%,rgba(128,128,128,.55) 52%,rgba(128,128,128,.6) 100%),linear-gradient(90deg,#ff2020,#ffb000 15%,#f0f000 25%,#20e020 40%,#20d0d0 55%,#2040ff 70%,#d020ff 85%,#ff2060)"></div><div class="a" style="left:1496px;top:80px;width:45px;height:45px;border:1px solid #b0b0b0;background:#fbfbfb"></div><svg class="a" style="left:1500px;top:84px" width="38" height="38" viewBox="0 0 38 38"><defs><linearGradient id="p3" x1="0" y1="0" x2="0.3" y2="1"><stop offset="0" stop-color="#3fd3f0"/><stop offset=".35" stop-color="#7a70e0"/><stop offset=".7" stop-color="#e04a8a"/><stop offset="1" stop-color="#ffb020"/></linearGradient></defs>
<path d="M19,1.5 C27,1.5 31,8 31,14 C31,22 23,27 15,36 C15,29 7,25 6.5,16 C6,8 11,1.5 19,1.5 Z" fill="url(#p3)"/></svg><svg class="a" style="left:5px;top:212px" width="31" height="30" viewBox="0 0 31 30"><rect x="4.5" y="6.5" width="21" height="17" rx="1" fill="none" stroke="#1c5fa8" stroke-width="1.3" stroke-dasharray="2,1.6"/></svg><svg class="a" style="left:5px;top:245px" width="31" height="30" viewBox="0 0 31 30"><path d="M8.5,4 C13,3 17,8 21,12 C26,17 26,24 21,26 C16,27.5 9,27 6,24 C2,20 3,6 8.5,4 Z" fill="none" stroke="#1c5fa8" stroke-width="1" stroke-dasharray="1.6,1.6"/></svg><svg class="a" style="left:5px;top:314px" width="31" height="33" viewBox="0 0 31 33"><defs><linearGradient id="sa" x1="0" y1="0" x2="1" y2="1"><stop offset="0" stop-color="#e4e8f0"/><stop offset=".45" stop-color="#cfe2f7"/><stop offset="1" stop-color="#6fb2ee"/></linearGradient></defs>
<rect x="5.5" y="6.5" width="19" height="19" fill="none" stroke="#1c5fa8" stroke-width="1.2" stroke-dasharray="2,1.5"/>
<rect x="8.5" y="9.5" width="13" height="13" fill="url(#sa)" stroke="#4a90e2" stroke-width="1"/></svg><svg class="a" style="left:5px;top:347px" width="31" height="33" viewBox="0 0 31 33"><rect x="3.5" y="4.5" width="14" height="12" fill="none" stroke="#a8b4c8" stroke-width="1" stroke-dasharray="1.5,1.5"/>
<path d="M20,9 H27 M24.5,6.5 L27,9 L24.5,11.5 M10.5,19 V27 M8,24.5 L10.5,27 L13,24.5" fill="none" stroke="#a8b4c8" stroke-width="1.1"/></svg><svg class="a" style="left:5px;top:380px" width="31" height="33" viewBox="0 0 31 33"><path d="M4,4 C12,8 18,16 23,25" stroke="#a9b5c9" stroke-width="3" fill="none" stroke-linecap="round"/>
<path d="M26,4 C17,9 10,16 5,25" stroke="#8e9bb1" stroke-width="3.2" fill="none" stroke-linecap="round"/></svg><svg class="a" style="left:0;top:0" width="260" height="370" viewBox="0 0 260 370"><g fill="none" stroke="#ff0000" stroke-linecap="round" stroke-linejoin="round">
<path stroke-width="6.8" d="M181.8,71.0 C179.7,71.2 172.8,71.2 168.9,72.3 C165.0,73.4 161.5,74.8 158.5,77.5 C155.5,80.2 153.0,83.8 150.7,88.5 C148.4,93.2 146.3,98.9 144.9,105.4 C143.5,111.9 142.6,120.3 142.3,127.4 C142.0,134.5 142.2,141.6 143.0,148.1 C143.8,154.6 144.7,161.1 146.8,166.3 C149.0,171.5 152.2,175.8 155.9,179.2 C159.6,182.6 164.2,185.3 168.9,187.0 C173.7,188.7 178.8,189.7 184.4,189.6 C190.0,189.5 197.4,188.7 202.6,186.3 C207.8,183.9 212.1,180.4 215.5,175.3 C218.9,170.2 221.4,163.0 223.3,155.9 C225.2,148.8 226.7,140.8 227.2,132.6 C227.7,124.4 227.4,114.4 226.5,106.6 C225.6,98.8 224.3,91.3 222.0,85.9 C219.7,80.5 216.6,77.0 212.9,74.3 C209.2,71.6 204.5,70.4 200.0,69.7 C195.5,69.0 188.1,70.0 185.7,70.1"/>
<path stroke-width="7.4" d="M-3.0,321.0 C-1.7,319.3 2.4,313.1 5.0,310.8 C7.6,308.6 8.3,307.8 12.5,307.5 C16.7,307.2 22.1,307.9 30.0,308.8 C37.9,309.6 49.7,312.2 60.0,312.9 C70.3,313.6 81.6,312.9 91.7,312.9 C101.8,312.9 113.9,312.1 120.8,312.9 C127.7,313.7 130.4,315.5 133.3,317.9 C136.2,320.3 138.4,324.5 138.3,327.5 C138.2,330.5 136.8,333.7 132.5,335.8 C128.2,337.9 120.7,338.6 112.5,340.4 C104.3,342.2 93.7,344.8 83.3,346.7 C72.9,348.6 59.7,350.6 50.0,351.7 C40.3,352.8 31.9,353.4 25.0,353.3 C18.1,353.2 13.0,351.9 8.3,350.8 C3.6,349.8 -1.1,347.6 -3.0,347.0"/>
</g></svg><svg class="a" style="left:2px;top:989px" width="24" height="24" viewBox="0 0 24 24"><path d="M12,2.5 V21.5 M2.5,12 H21.5" stroke="#1f3a5f" stroke-width="1.4"/>
<path d="M12,1.5 L9.5,4.5 H14.5 Z M12,22.5 L9.5,19.5 H14.5 Z M1.5,12 L4.5,9.5 V14.5 Z M22.5,12 L19.5,9.5 V14.5 Z" fill="#1f3a5f"/></svg><svg class="a" style="left:247px;top:989px" width="28" height="26" viewBox="0 0 28 26"><rect x="7.5" y="3.5" width="15" height="13" fill="none" stroke="#1f3a5f" stroke-width="1.2" stroke-dasharray="2,1.5"/>
<path d="M3.5,16 V3 M1.5,5 L3.5,2.5 L5.5,5 M7,21 H20 M18,19 L20.5,21 L18,23" fill="none" stroke="#1f3a5f" stroke-width="1.2"/></svg><svg class="a" style="left:492px;top:989px" width="28" height="26" viewBox="0 0 28 26"><rect x="7.5" y="3.5" width="15" height="13" fill="none" stroke="#1f3a5f" stroke-width="1.2"/>
<path d="M3.5,16 V3 M1.5,5 L3.5,2.5 L5.5,5 M7,21 H20 M18,19 L20.5,21 L18,23" fill="none" stroke="#1f3a5f" stroke-width="1.2"/></svg><svg class="a" style="left:1704px;top:986px" width="28" height="28" viewBox="0 0 28 28"><defs><linearGradient id="zb" x1="0" y1="0" x2="0" y2="1"><stop offset="0" stop-color="#fafafa"/><stop offset=".55" stop-color="#eceef2"/><stop offset="1" stop-color="#c9d0dc"/></linearGradient></defs>
<circle cx="14.3" cy="13.5" r="11" fill="url(#zb)" stroke="#8a8a8a" stroke-width="1.1"/><path d="M9,13.5 H19.5" stroke="#666" stroke-width="2.4"/></svg><svg class="a" style="left:1887px;top:986px" width="28" height="28" viewBox="0 0 28 28"><circle cx="14.3" cy="13.5" r="11" fill="url(#zb)" stroke="#8a8a8a" stroke-width="1.1"/><path d="M9,13.5 H19.5 M14.3,8.3 V18.7" stroke="#555" stroke-width="2.4"/></svg><svg class="a" style="left:1802px;top:984px" width="20" height="32" viewBox="0 0 20 32"><path d="M2,2 H17 V24 L9.5,30 L2,24 Z" fill="#1878d0"/></svg><svg class="a" style="left:20px;top:1034px" width="32" height="32" viewBox="0 0 32 32"><path d="M4,6.5 L14.5,5 V15 H4 Z M16,4.8 L28,3 V15 H16 Z M4,16.5 H14.5 V26.5 L4,25 Z M16,16.5 H28 V28.5 L16,26.8 Z" fill="#ffffff"/></svg><svg class="a" style="left:86px;top:1034px" width="28" height="32" viewBox="0 0 28 32"><circle cx="19.5" cy="11" r="7.3" fill="none" stroke="#1a1a1a" stroke-width="1.6"/><path d="M14.3,16.5 L4.5,26.5" stroke="#1a1a1a" stroke-width="1.8" stroke-linecap="round"/></svg><svg class="a" style="left:470px;top:1022px" width="118" height="58" viewBox="0 0 118 58"><path d="M13.3,10.3 L15,14.6 L19.3,16.3 L15,18 L13.3,22.3 L11.6,18 L7.3,16.3 L11.6,14.6 Z" fill="#e070f0"/><circle cx="33.3" cy="10.5" r="2.8" fill="#f0a820"/><circle cx="6.7" cy="37.2" r="2.8" fill="#40c060"/>
<ellipse cx="36" cy="54" rx="36" ry="8" fill="#a8d4f4"/><ellipse cx="52" cy="57" rx="14" ry="4" fill="#58b0ee"/>
<path d="M16,57 C20,35 38,20 80,17.5" fill="none" stroke="#c2e4f4" stroke-width="8"/><path d="M18,57 C23,37 40,23 80,18" fill="none" stroke="#eaf6fb" stroke-width="2.5"/>
<path d="M46,27.5 H77" stroke="#8a9ab8" stroke-width="3"/><path d="M50,29 V41 M61,29 V41 M72,29 V41" stroke="#9aaac2" stroke-width="5"/><path d="M50,29 V41 M61,29 V41 M72,29 V41" stroke="#d8e0ec" stroke-width="1.5"/>
<path d="M44,45 C55,39 95,39 117,42 L117,50 L44,50 Z" fill="#4aa84e"/><path d="M104,50 L117,40 V56 H104 Z" fill="#2f6e3a"/>
<path d="M80,12 C82,3 96,2 99,10 C102,18 98,24 100,32 C103,42 102,50 96,53 L82,53 C80,45 86,38 84,30 C82,24 78,20 80,12 Z" fill="#dadde4"/>
<path d="M92,8 C98,14 96,26 99,34 C101,42 99,50 95,52" fill="none" stroke="#a9adb8" stroke-width="3"/>
<ellipse cx="91" cy="53" rx="19" ry="4.5" fill="#2a6bc4"/></svg><svg class="a" style="left:610px;top:1036px" width="28" height="28" viewBox="0 0 28 28"><circle cx="14" cy="14" r="10" fill="none" stroke="#ffffff" stroke-width="2.2"/></svg><svg class="a" style="left:680px;top:1036px" width="30" height="28" viewBox="0 0 30 28"><path d="M3.5,2.5 V5.5 H19.5 V2.5 M3.5,25.5 V22.5 H19.5 V25.5" fill="none" stroke="#fff" stroke-width="1.2"/>
<rect x="3.5" y="8" width="16" height="12" fill="none" stroke="#fff" stroke-width="1.3"/><path d="M26.5,2 V26" stroke="#fff" stroke-width="1.2"/><rect x="24.5" y="8.5" width="4" height="3.5" fill="#fff"/></svg><svg class="a" style="left:754px;top:1031px" width="38" height="38" viewBox="0 0 38 38"><defs><linearGradient id="ed1" x1="0" y1="0" x2="1" y2="1"><stop offset="0" stop-color="#37c0d8"/><stop offset=".6" stop-color="#3ac07a"/><stop offset="1" stop-color="#5ee06a"/></linearGradient>
<linearGradient id="ed2" x1="0" y1="0" x2="0" y2="1"><stop offset="0" stop-color="#1f8ae0"/><stop offset="1" stop-color="#1558b0"/></linearGradient></defs>
<circle cx="19" cy="19" r="18" fill="url(#ed1)"/>
<path d="M1.5,21 C1,10 9,6 16,6.5 C24,7 28,12 28,16 C28,20 24,22 20,22 C16,22 13,24 14,28 C15,33 22,36 30,34 C24,38 14,38 8,34 C3,30 1.5,25 1.5,21 Z" fill="url(#ed2)"/>
<ellipse cx="23" cy="21.5" rx="5.2" ry="3.6" fill="#2e2130"/></svg><svg class="a" style="left:828px;top:1030px" width="40" height="40" viewBox="0 0 40 40"><circle cx="20" cy="20" r="16.5" fill="#e24034"/>
<path d="M20,20 L5.711,11.75 A16.5,16.5 0 0 0 20,36.5 Z" fill="#2ea44f"/>
<path d="M20,20 L20,36.5 A16.5,16.5 0 0 0 34.289,11.75 Z" fill="#f8c12c"/>
<circle cx="20" cy="20" r="7.590000000000001" fill="#fff"/><circle cx="20" cy="20" r="5.9399999999999995" fill="#3b7de4"/></svg><svg class="a" style="left:903px;top:1030px" width="50" height="46" viewBox="0 0 50 46"><circle cx="20" cy="20" r="16.5" fill="#e24034"/>
<path d="M20,20 L5.711,11.75 A16.5,16.5 0 0 0 20,36.5 Z" fill="#2ea44f"/>
<path d="M20,20 L20,36.5 A16.5,16.5 0 0 0 34.289,11.75 Z" fill="#f8c12c"/>
<circle cx="20" cy="20" r="7.590000000000001" fill="#fff"/><circle cx="20" cy="20" r="5.9399999999999995" fill="#3b7de4"/><circle cx="29" cy="29" r="12" fill="#ff0000"/></svg><svg class="a" style="left:980px;top:1032px" width="36" height="34" viewBox="0 0 36 34"><rect x="1" y="1" width="34" height="32" rx="5" fill="#001e36"/><text x="17.5" y="24" text-anchor="middle" font-family="Liberation Sans" font-weight="bold" font-size="20" fill="#31a8ff">Ps</text></svg><svg class="a" style="left:1055px;top:1035px" width="36" height="30" viewBox="0 0 36 30"><path d="M2,3 H13 L16,6 H33 V27 H2 Z" fill="#e8a010"/><rect x="2" y="8" width="32" height="19" rx="1" fill="#fcd04f"/>
<path d="M8,28 V16 H27 V28 H22 V21 H13 V28 Z" fill="#3a8ee6"/></svg><svg class="a" style="left:1126px;top:1034px" width="42" height="36" viewBox="0 0 42 36"><ellipse cx="17" cy="20" rx="15.5" ry="12" fill="#d6e6f5" stroke="#5b97cf" stroke-width="1.5"/>
<circle cx="7" cy="19" r="2.8" fill="#e84a4a"/><circle cx="12" cy="12" r="2.8" fill="#4fb84f"/><circle cx="20" cy="10.5" r="2.8" fill="#f0b428"/><circle cx="14" cy="22" r="2" fill="#444c5a"/>
<ellipse cx="19" cy="29" rx="4.5" ry="2.5" fill="#545058"/>
<path d="M16,33 L31,6" stroke="#e8892a" stroke-width="3" stroke-linecap="round"/><path d="M29,6 L34,1 L37,4 L33,9 Z" fill="#e0b070"/></svg><svg class="a" style="left:1269px;top:1033px" width="40" height="40" viewBox="0 0 40 40"><circle cx="18.5" cy="18.5" r="16" fill="#ffffff"/><circle cx="18.5" cy="18.5" r="13.5" fill="#0a90d8"/>
<text x="18.5" y="27" text-anchor="middle" font-family="Liberation Sans" font-weight="bold" font-size="24" fill="#fff">?</text>
<circle cx="30" cy="25" r="7" fill="#f4b020" stroke="#fff" stroke-width="1"/><path d="M30,22.5 V29" stroke="#fff" stroke-width="2"/><circle cx="30" cy="20.5" r="1" fill="#fff"/></svg><svg class="a" style="left:1346px;top:1033px" width="36" height="34" viewBox="0 0 36 34"><defs><linearGradient id="sun" x1="0" y1="0" x2="0" y2="1"><stop offset="0" stop-color="#ffc800"/><stop offset="1" stop-color="#f07a10"/></linearGradient></defs>
<circle cx="18" cy="15" r="13.5" fill="url(#sun)"/><ellipse cx="17" cy="26" rx="15.5" ry="6.5" fill="#9aa4b8"/><ellipse cx="18" cy="23" rx="10" ry="6" fill="#c8c8c4"/></svg><svg class="a" style="left:1466px;top:1038px" width="28" height="20" viewBox="0 0 28 20"><path d="M5,15.5 L14,6.5 L23,15.5" fill="none" stroke="#fff" stroke-width="1.4"/></svg><svg class="a" style="left:1514px;top:1038px" width="30" height="26" viewBox="0 0 30 26"><path d="M3,8.5 H7.5 L14,3 V23 L7.5,17.5 H3 Z" fill="none" stroke="#fff" stroke-width="1.3"/>
<path d="M17.5,10 Q19.5,13 17.5,16" fill="none" stroke="#fff" stroke-width="1.1"/><path d="M20.5,6.5 Q24.5,13 20.5,19.5" fill="none" stroke="#aaa" stroke-width="1.1"/><path d="M23.5,3.5 Q29,13 23.5,22.5" fill="none" stroke="#888" stroke-width="1.1"/></svg><svg class="a" style="left:1570px;top:1038px" width="26" height="26" viewBox="0 0 26 26"><path d="M17.5,3.5 L9.5,21" stroke="#fff" stroke-width="4.8" stroke-linecap="round"/><path d="M17.5,3.5 L9.5,21" stroke="#1c1c1c" stroke-width="2.2" stroke-linecap="round"/>
<path d="M7.5,21.8 A4.3,4.3 0 1 1 9.5,13.8" fill="none" stroke="#fff" stroke-width="1.3"/><path d="M16,13.3 Q21,14 21.5,11.5 Q21.5,9.5 19.5,9" fill="none" stroke="#fff" stroke-width="1.3"/></svg><svg class="a" style="left:1622px;top:1037px" width="40" height="26" viewBox="0 0 40 26"><rect x="3.5" y="3.5" width="32" height="18" rx="1.2" fill="none" stroke="#fff" stroke-width="1.3"/><circle cx="7.30" cy="7.4" r="0.75" fill="#fff"/><circle cx="10.35" cy="7.4" r="0.75" fill="#fff"/><circle cx="13.40" cy="7.4" r="0.75" fill="#fff"/><circle cx="16.45" cy="7.4" r="0.75" fill="#fff"/><circle cx="19.50" cy="7.4" r="0.75" fill="#fff"/><circle cx="22.55" cy="7.4" r="0.75" fill="#fff"/><circle cx="25.60" cy="7.4" r="0.75" fill="#fff"/><circle cx="28.65" cy="7.4" r="0.75" fill="#fff"/><circle cx="31.70" cy="7.4" r="0.75" fill="#fff"/><circle cx="13.70" cy="12.5" r="0.75" fill="#fff"/><circle cx="16.70" cy="12.5" r="0.75" fill="#fff"/><circle cx="19.70" cy="12.5" r="0.75" fill="#fff"/><circle cx="22.70" cy="12.5" r="0.75" fill="#fff"/><circle cx="25.70" cy="12.5" r="0.75" fill="#fff"/>
<path d="M7,12.5 H11 M28,12.5 H32 M7,17.5 H11 M13,17.5 H26 M28,17.5 H32" stroke="#fff" stroke-width="1.2"/></svg><svg class="a" style="left:1855px;top:1034px" width="40" height="40" viewBox="0 0 40 40"><path d="M3.5,4.5 H27.5 V21.5 H12 L6,27 V21.5 H3.5 Z" fill="#fff"/><path d="M8,9.5 H23 M8,13.5 H23 M8,17.5 H20" stroke="#1c1c1c" stroke-width="1.3"/>
<circle cx="26.5" cy="27.5" r="12" fill="#2e1f33" stroke="#6a6a6a" stroke-width="1.2"/><text x="26.5" y="34.5" text-anchor="middle" font-family="Liberation Sans" font-weight="bold" font-size="18" fill="#fff">3</text></svg>
</body></html>
